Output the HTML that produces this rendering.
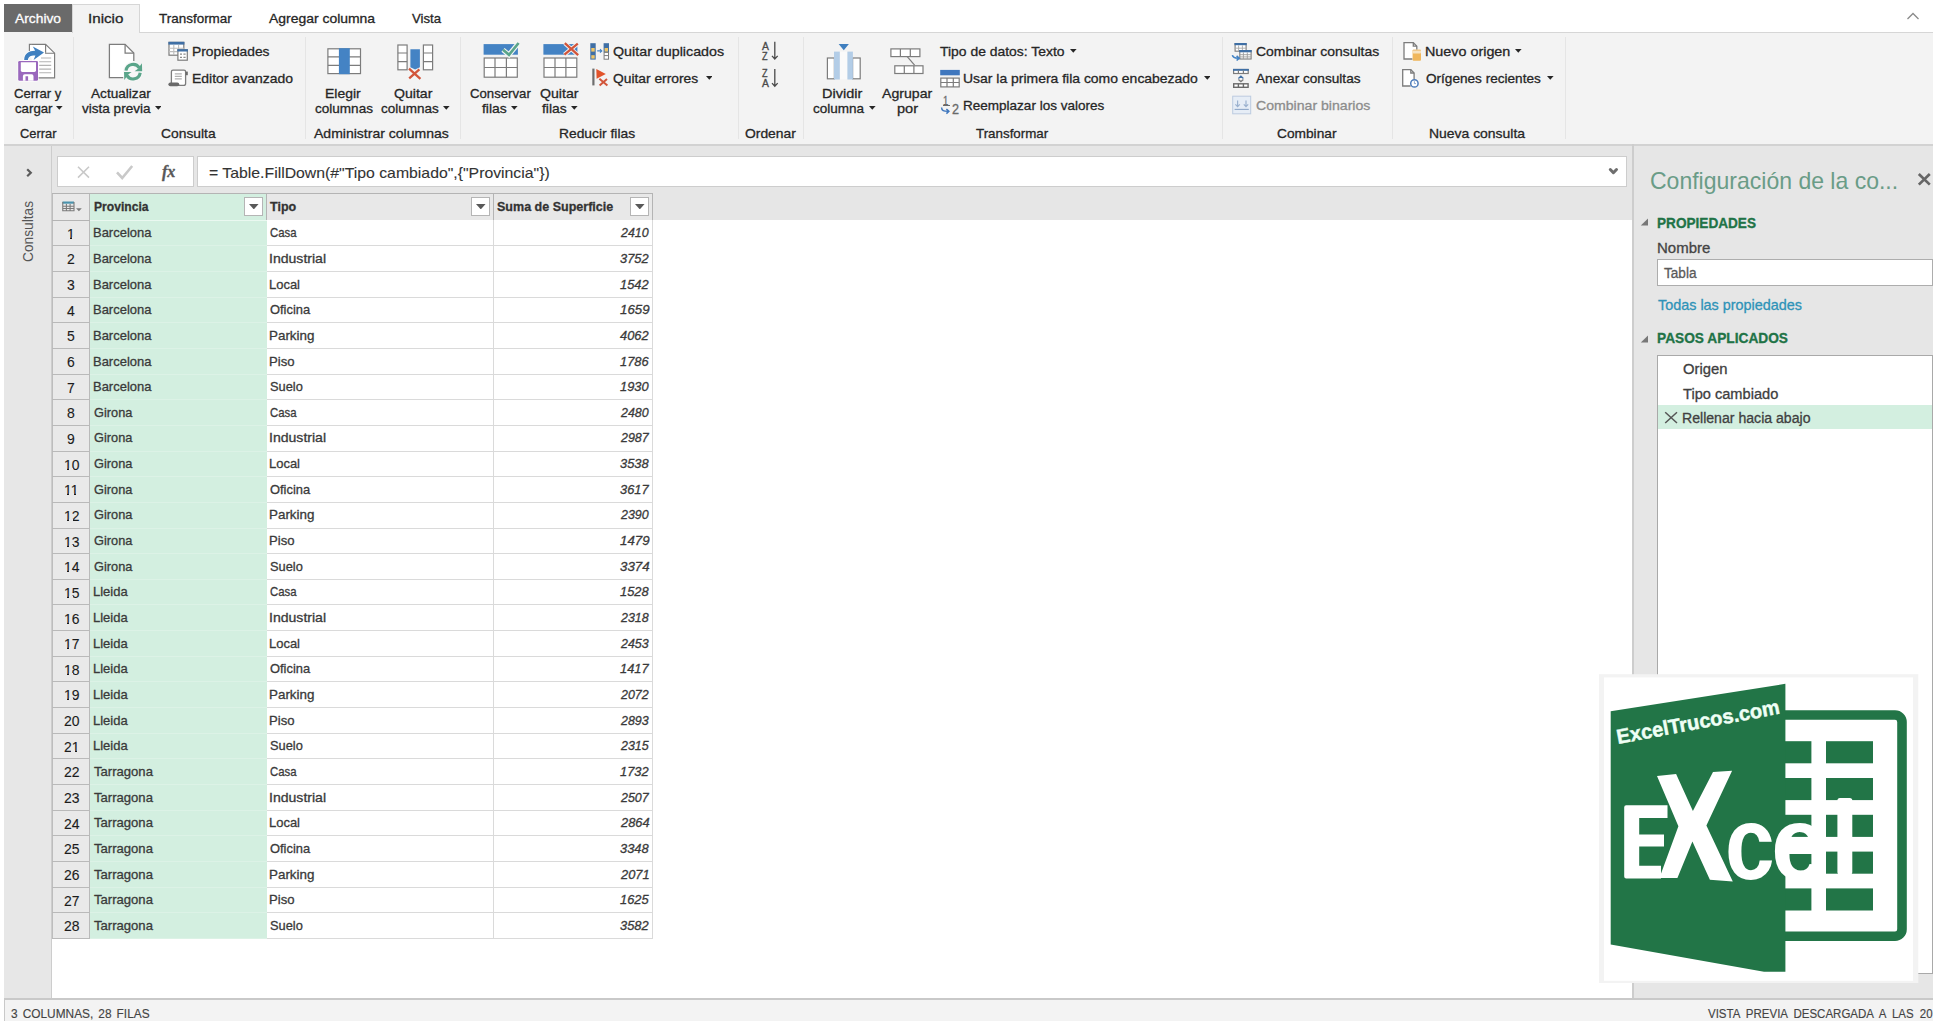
<!DOCTYPE html>
<html><head><meta charset="utf-8"><title>Power Query</title><style>
html,body{margin:0;padding:0;}
body{width:1933px;height:1021px;overflow:hidden;background:#fff;position:relative;font-family:"Liberation Sans", sans-serif;}
#root{position:absolute;left:0;top:0;width:1933px;height:1021px;overflow:hidden;}
#root div,#root svg,#root span.t{position:absolute;}
span.t{white-space:pre;display:block;}
</style></head>
<body><div id="root">
<div style="left:4px;top:32px;width:1929px;height:112px;background:#f3f3f3;"></div>
<div style="left:140px;top:32px;width:1793px;height:1px;background:#d6d6d6;"></div>
<div style="left:4px;top:4px;width:68px;height:28px;background:#6a6a6a;"></div>
<div style="left:72px;top:4px;width:68px;height:29px;background:#f3f3f3;border:1px solid #d6d6d6;box-sizing:border-box;border-bottom:none;"></div>
<div style="left:4px;top:144px;width:1929px;height:854px;background:#e6e6e6;"></div>
<div style="left:4px;top:144px;width:47px;height:854px;background:#e7e7e7;"></div>
<div style="left:51px;top:144px;width:1px;height:854px;background:#cdcdcd;"></div>
<div style="left:4px;top:144px;width:1929px;height:1.6px;background:#d2d2d2;"></div>
<div style="left:52px;top:220px;width:1580px;height:778px;background:#fff;"></div>
<div style="left:1632.2px;top:144px;width:1.8px;height:854px;background:#cdcdcd;"></div>
<div style="left:4px;top:998px;width:1929px;height:23px;background:#f3f3f3;"></div>
<div style="left:4px;top:997.7px;width:1929px;height:2.2px;background:#c9c9c9;"></div>
<div style="left:4px;top:998px;width:1px;height:23px;background:#c9c9c9;"></div>
<span class="t" style="left:15.00px;top:9.00px;line-height:19px;color:#fff;font-size:13.5px;font-weight:400;-webkit-text-stroke:0.3px #fff;transform-origin:0 0;transform:scaleX(1.0223);">Archivo</span>
<span class="t" style="left:87.88px;top:9.00px;line-height:19px;color:#262626;font-size:13.5px;font-weight:400;-webkit-text-stroke:0.3px #262626;transform-origin:0 0;transform:scaleX(1.1231);">Inicio</span>
<span class="t" style="left:158.70px;top:9.00px;line-height:19px;color:#262626;font-size:13.5px;font-weight:400;-webkit-text-stroke:0.3px #262626;transform-origin:0 0;transform:scaleX(0.9971);">Transformar</span>
<span class="t" style="left:269.00px;top:9.00px;line-height:19px;color:#262626;font-size:13.5px;font-weight:400;-webkit-text-stroke:0.3px #262626;transform-origin:0 0;transform:scaleX(1.0320);">Agregar columna</span>
<span class="t" style="left:412.00px;top:9.00px;line-height:19px;color:#262626;font-size:13.5px;font-weight:400;-webkit-text-stroke:0.3px #262626;transform-origin:0 0;transform:scaleX(0.9749);">Vista</span>
<svg style="left:1906px;top:11px" width="14" height="10" viewBox="0 0 14 10"><path d="M1.5 8 L7 2.5 L12.5 8" fill="none" stroke="#8a8a8a" stroke-width="1.3"/></svg>
<div style="left:73.0px;top:37px;width:1px;height:102px;background:#e5e5e5;"></div>
<div style="left:305.0px;top:37px;width:1px;height:102px;background:#e5e5e5;"></div>
<div style="left:460.0px;top:37px;width:1px;height:102px;background:#e5e5e5;"></div>
<div style="left:737.5px;top:37px;width:1px;height:102px;background:#e5e5e5;"></div>
<div style="left:803.0px;top:37px;width:1px;height:102px;background:#e5e5e5;"></div>
<div style="left:1222.0px;top:37px;width:1px;height:102px;background:#e5e5e5;"></div>
<div style="left:1392.0px;top:37px;width:1px;height:102px;background:#e5e5e5;"></div>
<div style="left:1565.0px;top:37px;width:1px;height:102px;background:#e5e5e5;"></div>
<span class="t" style="left:14.00px;top:84.00px;line-height:19px;color:#262626;font-size:13.5px;font-weight:400;-webkit-text-stroke:0.3px #262626;transform-origin:0 0;transform:scaleX(0.9714);">Cerrar y</span>
<span class="t" style="left:14.60px;top:99.00px;line-height:19px;color:#262626;font-size:13.5px;font-weight:400;-webkit-text-stroke:0.3px #262626;transform-origin:0 0;transform:scaleX(0.9801);">cargar</span>
<svg style="left:56.1px;top:106.3px" width="6.6" height="3.8" viewBox="0 0 6.6 3.8"><path d="M0 0H6.6L3.3 3.8Z" fill="#262626"/></svg>
<span class="t" style="left:90.70px;top:84.00px;line-height:19px;color:#262626;font-size:13.5px;font-weight:400;-webkit-text-stroke:0.3px #262626;transform-origin:0 0;transform:scaleX(1.0087);">Actualizar</span>
<span class="t" style="left:82.00px;top:99.00px;line-height:19px;color:#262626;font-size:13.5px;font-weight:400;-webkit-text-stroke:0.3px #262626;transform-origin:0 0;transform:scaleX(1.0033);">vista previa</span>
<svg style="left:154.6px;top:106.3px" width="6.6" height="3.8" viewBox="0 0 6.6 3.8"><path d="M0 0H6.6L3.3 3.8Z" fill="#262626"/></svg>
<span class="t" style="left:191.78px;top:42.00px;line-height:19px;color:#262626;font-size:13.5px;font-weight:400;-webkit-text-stroke:0.3px #262626;transform-origin:0 0;transform:scaleX(1.0219);">Propiedades</span>
<span class="t" style="left:191.77px;top:69.00px;line-height:19px;color:#262626;font-size:13.5px;font-weight:400;-webkit-text-stroke:0.3px #262626;transform-origin:0 0;transform:scaleX(1.0348);">Editor avanzado</span>
<span class="t" style="left:20.20px;top:124.00px;line-height:19px;color:#262626;font-size:13.5px;font-weight:400;-webkit-text-stroke:0.3px #262626;transform-origin:0 0;transform:scaleX(0.9521);">Cerrar</span>
<span class="t" style="left:160.60px;top:124.00px;line-height:19px;color:#262626;font-size:13.5px;font-weight:400;-webkit-text-stroke:0.3px #262626;transform-origin:0 0;transform:scaleX(1.0247);">Consulta</span>
<span class="t" style="left:325.47px;top:84.00px;line-height:19px;color:#262626;font-size:13.5px;font-weight:400;-webkit-text-stroke:0.3px #262626;transform-origin:0 0;transform:scaleX(1.0318);">Elegir</span>
<span class="t" style="left:314.60px;top:99.00px;line-height:19px;color:#262626;font-size:13.5px;font-weight:400;-webkit-text-stroke:0.3px #262626;transform-origin:0 0;transform:scaleX(1.0030);">columnas</span>
<span class="t" style="left:394.40px;top:84.00px;line-height:19px;color:#262626;font-size:13.5px;font-weight:400;-webkit-text-stroke:0.3px #262626;transform-origin:0 0;transform:scaleX(1.0438);">Quitar</span>
<span class="t" style="left:380.80px;top:99.00px;line-height:19px;color:#262626;font-size:13.5px;font-weight:400;-webkit-text-stroke:0.3px #262626;transform-origin:0 0;transform:scaleX(0.9978);">columnas</span>
<svg style="left:443.0px;top:106.3px" width="6.6" height="3.8" viewBox="0 0 6.6 3.8"><path d="M0 0H6.6L3.3 3.8Z" fill="#262626"/></svg>
<span class="t" style="left:314.00px;top:124.00px;line-height:19px;color:#262626;font-size:13.5px;font-weight:400;-webkit-text-stroke:0.3px #262626;transform-origin:0 0;transform:scaleX(1.0381);">Administrar columnas</span>
<span class="t" style="left:469.70px;top:84.00px;line-height:19px;color:#262626;font-size:13.5px;font-weight:400;-webkit-text-stroke:0.3px #262626;transform-origin:0 0;transform:scaleX(0.9765);">Conservar</span>
<span class="t" style="left:482.00px;top:99.00px;line-height:19px;color:#262626;font-size:13.5px;font-weight:400;-webkit-text-stroke:0.3px #262626;transform-origin:0 0;transform:scaleX(1.0306);">filas</span>
<svg style="left:511.4px;top:106.3px" width="6.6" height="3.8" viewBox="0 0 6.6 3.8"><path d="M0 0H6.6L3.3 3.8Z" fill="#262626"/></svg>
<span class="t" style="left:540.00px;top:84.00px;line-height:19px;color:#262626;font-size:13.5px;font-weight:400;-webkit-text-stroke:0.3px #262626;transform-origin:0 0;transform:scaleX(1.0465);">Quitar</span>
<span class="t" style="left:542.00px;top:99.00px;line-height:19px;color:#262626;font-size:13.5px;font-weight:400;-webkit-text-stroke:0.3px #262626;transform-origin:0 0;transform:scaleX(1.0265);">filas</span>
<svg style="left:571.3px;top:106.3px" width="6.6" height="3.8" viewBox="0 0 6.6 3.8"><path d="M0 0H6.6L3.3 3.8Z" fill="#262626"/></svg>
<span class="t" style="left:613.30px;top:42.00px;line-height:19px;color:#262626;font-size:13.5px;font-weight:400;-webkit-text-stroke:0.3px #262626;transform-origin:0 0;transform:scaleX(1.0578);">Quitar duplicados</span>
<span class="t" style="left:613.30px;top:69.00px;line-height:19px;color:#262626;font-size:13.5px;font-weight:400;-webkit-text-stroke:0.3px #262626;transform-origin:0 0;transform:scaleX(1.0225);">Quitar errores</span>
<svg style="left:705.7px;top:75.9px" width="6.6" height="3.8" viewBox="0 0 6.6 3.8"><path d="M0 0H6.6L3.3 3.8Z" fill="#262626"/></svg>
<span class="t" style="left:558.98px;top:124.00px;line-height:19px;color:#262626;font-size:13.5px;font-weight:400;-webkit-text-stroke:0.3px #262626;transform-origin:0 0;transform:scaleX(1.0241);">Reducir filas</span>
<span class="t" style="left:744.60px;top:124.00px;line-height:19px;color:#262626;font-size:13.5px;font-weight:400;-webkit-text-stroke:0.3px #262626;transform-origin:0 0;transform:scaleX(1.0274);">Ordenar</span>
<span class="t" style="left:822.12px;top:84.00px;line-height:19px;color:#262626;font-size:13.5px;font-weight:400;-webkit-text-stroke:0.3px #262626;transform-origin:0 0;transform:scaleX(1.0755);">Dividir</span>
<span class="t" style="left:813.00px;top:99.00px;line-height:19px;color:#262626;font-size:13.5px;font-weight:400;-webkit-text-stroke:0.3px #262626;transform-origin:0 0;transform:scaleX(1.0016);">columna</span>
<svg style="left:869.1px;top:106.3px" width="6.6" height="3.8" viewBox="0 0 6.6 3.8"><path d="M0 0H6.6L3.3 3.8Z" fill="#262626"/></svg>
<span class="t" style="left:882.00px;top:84.00px;line-height:19px;color:#262626;font-size:13.5px;font-weight:400;-webkit-text-stroke:0.3px #262626;transform-origin:0 0;transform:scaleX(1.0447);">Agrupar</span>
<span class="t" style="left:897.00px;top:99.00px;line-height:19px;color:#262626;font-size:13.5px;font-weight:400;-webkit-text-stroke:0.3px #262626;transform-origin:0 0;transform:scaleX(1.0791);">por</span>
<span class="t" style="left:940.20px;top:42.00px;line-height:19px;color:#262626;font-size:13.5px;font-weight:400;-webkit-text-stroke:0.3px #262626;transform-origin:0 0;transform:scaleX(1.0302);">Tipo de datos: Texto</span>
<svg style="left:1070px;top:48.9px" width="6.6" height="3.8" viewBox="0 0 6.6 3.8"><path d="M0 0H6.6L3.3 3.8Z" fill="#262626"/></svg>
<span class="t" style="left:962.77px;top:69.00px;line-height:19px;color:#262626;font-size:13.5px;font-weight:400;-webkit-text-stroke:0.3px #262626;transform-origin:0 0;transform:scaleX(1.0330);">Usar la primera fila como encabezado</span>
<svg style="left:1203.6px;top:75.9px" width="6.6" height="3.8" viewBox="0 0 6.6 3.8"><path d="M0 0H6.6L3.3 3.8Z" fill="#262626"/></svg>
<span class="t" style="left:962.80px;top:96.00px;line-height:19px;color:#262626;font-size:13.5px;font-weight:400;-webkit-text-stroke:0.3px #262626;transform-origin:0 0;transform:scaleX(1.0014);">Reemplazar los valores</span>
<span class="t" style="left:976.00px;top:124.00px;line-height:19px;color:#262626;font-size:13.5px;font-weight:400;-webkit-text-stroke:0.3px #262626;transform-origin:0 0;transform:scaleX(0.9889);">Transformar</span>
<span class="t" style="left:1255.60px;top:42.00px;line-height:19px;color:#262626;font-size:13.5px;font-weight:400;-webkit-text-stroke:0.3px #262626;transform-origin:0 0;transform:scaleX(1.0322);">Combinar consultas</span>
<span class="t" style="left:1255.60px;top:69.00px;line-height:19px;color:#262626;font-size:13.5px;font-weight:400;-webkit-text-stroke:0.3px #262626;transform-origin:0 0;transform:scaleX(1.0096);">Anexar consultas</span>
<span class="t" style="left:1255.60px;top:96.00px;line-height:19px;color:#8c8c8c;font-size:13.5px;font-weight:400;-webkit-text-stroke:0.3px #8c8c8c;transform-origin:0 0;transform:scaleX(1.0437);">Combinar binarios</span>
<span class="t" style="left:1276.80px;top:124.00px;line-height:19px;color:#262626;font-size:13.5px;font-weight:400;-webkit-text-stroke:0.3px #262626;transform-origin:0 0;transform:scaleX(1.0165);">Combinar</span>
<span class="t" style="left:1425.04px;top:42.00px;line-height:19px;color:#262626;font-size:13.5px;font-weight:400;-webkit-text-stroke:0.3px #262626;transform-origin:0 0;transform:scaleX(1.0623);">Nuevo origen</span>
<svg style="left:1515.3px;top:48.9px" width="6.6" height="3.8" viewBox="0 0 6.6 3.8"><path d="M0 0H6.6L3.3 3.8Z" fill="#262626"/></svg>
<span class="t" style="left:1426.20px;top:69.00px;line-height:19px;color:#262626;font-size:13.5px;font-weight:400;-webkit-text-stroke:0.3px #262626;transform-origin:0 0;transform:scaleX(1.0061);">Orígenes recientes</span>
<svg style="left:1547px;top:75.9px" width="6.6" height="3.8" viewBox="0 0 6.6 3.8"><path d="M0 0H6.6L3.3 3.8Z" fill="#262626"/></svg>
<span class="t" style="left:1428.97px;top:124.00px;line-height:19px;color:#262626;font-size:13.5px;font-weight:400;-webkit-text-stroke:0.3px #262626;transform-origin:0 0;transform:scaleX(1.0319);">Nueva consulta</span>
<svg style="left:14px;top:40px" width="46" height="44" viewBox="14 40 46 44"><path d="M29.4 51V44.4H45.6L54.6 53.2V77.9H37" fill="#fff" stroke="#7c7c7c" stroke-width="1.15"/><path d="M45.6 44.4V53.2H54.6" fill="none" stroke="#7c7c7c" stroke-width="1.15"/><path d="M41 58H51.2M39.2 61.7H51.2M39.2 65.4H51.2M39.2 69.1H51.2M39.2 72.8H51.2" stroke="#b4b4b4" stroke-width="1.1"/><path d="M24.2 60 C24.2 53.2 29.5 50.6 35.2 50.8 L32.8 46.6 L44 52.6 L33.6 59.9 L35.4 55.4 C31 55.2 28.2 56.6 27.9 60 Z" fill="#3f80c0" stroke="#fff" stroke-width="1.6" paint-order="stroke"/><rect x="18.2" y="61" width="19.8" height="19.8" rx="1.3" fill="#9a68bd" stroke="#fff" stroke-width="1.2" paint-order="stroke"/><path d="M20.8 62.2H36V70.3Q36 71.9 34.4 71.9H22.4Q20.8 71.9 20.8 70.3Z" fill="#fff"/><path d="M22.9 80.8V76.2Q22.9 74.3 24.8 74.3H31.6Q33.5 74.3 33.5 76.2V80.8H28.1V76.2H25.5V80.8Z" fill="#fff"/></svg>
<svg style="left:104px;top:40px" width="42" height="44" viewBox="104 40 42 44"><path d="M123.2 77.5H109.4V44.4H125.1L133.8 53V61" fill="#fff" stroke="#7c7c7c" stroke-width="1.25"/><path d="M125.1 44.4V53H133.8" fill="none" stroke="#7c7c7c" stroke-width="1.25"/><circle cx="133.1" cy="71.6" r="10" fill="#f7f7f7"/><path d="M126 70.6 A7.2 7.2 0 0 1 139.3 67.9" fill="none" stroke="#5aa58a" stroke-width="3.1"/><path d="M141.9 63.2L142.2 71.2H134.6L138 68.8Z" fill="#5aa58a"/><path d="M140.2 72.7 A7.2 7.2 0 0 1 126.9 75.4" fill="none" stroke="#5aa58a" stroke-width="3.1"/><path d="M124.3 80L124 72.1H131.6L128.2 74.4Z" fill="#5aa58a"/></svg>
<svg style="left:166px;top:40px" width="24" height="23" viewBox="166 40 24 23"><rect x="169" y="42.4" width="14.8" height="12.8" fill="#fff" stroke="#7c7c7c" stroke-width="1.2"/><rect x="168.4" y="41.8" width="16" height="2.8" fill="#3f6fa5"/><path d="M173.8 45V55M178.6 45V50M169 48.3H184M169 51.6H177" stroke="#bdbdbd" stroke-width="1.1" fill="none"/><rect x="177.9" y="49.8" width="9.4" height="10.4" fill="#fff" stroke="#7c7c7c" stroke-width="1.2"/><rect x="177.3" y="49.2" width="10.6" height="2.3" fill="#3f6fa5"/><path d="M180 54.2H182M183.4 54.2H185.6M180 57.3H182M183.4 57.3H185.6" stroke="#8a8a8a" stroke-width="1.2"/></svg>
<svg style="left:166px;top:68px" width="24" height="20" viewBox="166 68 24 20"><path d="M171.4 83V71.8Q171.4 70.2 173 70.2H184Q185.6 70.2 185.6 71.8V83.4Q185.6 85.4 183.6 85.4H178" fill="#fff" stroke="#7c7c7c" stroke-width="1.3"/><path d="M185.6 71.6H187.8V75.2H185.6Z" fill="#6a6a6a"/><path d="M174.8 73.9H181.8M174.8 76.4H181.8M174.8 78.9H181.8" stroke="#b0b0b0" stroke-width="1.1"/><rect x="168.4" y="82.4" width="10.8" height="3.8" rx="1.9" fill="#6a6a6a"/></svg>
<svg style="left:325px;top:46px" width="39" height="30" viewBox="325 46 39 30"><rect x="327.9" y="48.8" width="32.6" height="24.8" fill="#fff" stroke="#7c7c7c" stroke-width="1.2"/><path d="M327.9 56.8H360.5M327.9 65.4H360.5" stroke="#7c7c7c" stroke-width="1.2"/><rect x="338.9" y="48.2" width="10.9" height="26" fill="#4483c4"/></svg>
<svg style="left:395px;top:42px" width="41" height="40" viewBox="395 42 41 40"><rect x="397.9" y="45" width="9.2" height="24.8" fill="#fff" stroke="#7c7c7c" stroke-width="1.2"/><path d="M397.9 53H407.1M397.9 61.6H407.1" stroke="#7c7c7c" stroke-width="1.2"/><rect x="423.4" y="45" width="9.2" height="24.8" fill="#fff" stroke="#7c7c7c" stroke-width="1.2"/><path d="M423.4 53H432.6M423.4 61.6H432.6" stroke="#7c7c7c" stroke-width="1.2"/><path d="M410.4 49.2H419.9V67.2L415.1 69.4L410.4 67.2Z" fill="#4483c4"/><path d="M409 68.6L420.4 78.8M419.4 69.4L409.2 78.4" stroke="#d2553a" stroke-width="2.3" fill="none"/></svg>
<svg style="left:481px;top:40px" width="41" height="40" viewBox="481 40 41 40"><rect x="483.6" y="44.1" width="34.3" height="10.6" fill="#4483c4"/><rect x="484.2" y="58" width="33.1" height="19.2" fill="#fff" stroke="#7c7c7c" stroke-width="1.2"/><path d="M495 58V77.2M506.4 58V77.2M484.2 67.5H517.3" stroke="#7c7c7c" stroke-width="1.2"/><path d="M503 49.8L509 54.8L518.6 43" fill="none" stroke="#f3f6f5" stroke-width="5"/><path d="M503 49.8L509 54.8L518.6 43" fill="none" stroke="#5aa58a" stroke-width="2.7"/></svg>
<svg style="left:541px;top:40px" width="41" height="40" viewBox="541 40 41 40"><rect x="543.4" y="44.1" width="34" height="10.6" fill="#4483c4"/><rect x="544" y="58" width="32.8" height="19.2" fill="#fff" stroke="#7c7c7c" stroke-width="1.2"/><path d="M555 58V77.2M565.9 58V77.2M544 67.5H576.8" stroke="#7c7c7c" stroke-width="1.2"/><path d="M564.8 43.2L578.2 55.2M577.8 43.6L564.4 54.6" stroke="#f3f3f3" stroke-width="4.2" fill="none"/><path d="M564.8 43.2L578.2 55.2M577.8 43.6L564.4 54.6" stroke="#d2553a" stroke-width="2.3" fill="none"/></svg>
<svg style="left:588px;top:41px" width="24" height="21" viewBox="588 41 24 21"><rect x="590.3" y="43.2" width="5.4" height="16.4" fill="#3f6fa5"/><rect x="591.3" y="48" width="3.4" height="3.6" fill="#f0c566"/><rect x="591.3" y="55.2" width="3.4" height="3.4" fill="#f0c566"/><path d="M597.2 50.9H601.6M600 49.2L601.8 50.9L600 52.6" stroke="#4483c4" stroke-width="1.1" fill="none"/><rect x="603.6" y="43.2" width="5.4" height="9" fill="#3f6fa5"/><rect x="604.6" y="48" width="3.4" height="3.6" fill="#f0c566"/><rect x="604.1" y="52.4" width="4.4" height="6.8" fill="#fff" stroke="#7c7c7c" stroke-width="1"/><path d="M604.1 55.6H608.5" stroke="#7c7c7c" stroke-width="1"/></svg>
<svg style="left:590px;top:67px" width="20" height="21" viewBox="590 67 20 21"><rect x="592.3" y="68.6" width="2.2" height="16.8" fill="#6e6e6e"/><path d="M596.3 69L605.8 74L596.6 78.8Z" fill="#e2532b"/><path d="M599.4 78.8L607.4 85.6M607 79L599.6 85.4" stroke="#d2553a" stroke-width="2" fill="none"/></svg>
<svg style="left:760px;top:40px" width="20" height="22" viewBox="760 40 20 22"><path d="M774.8 41.8V59M772 55.9L774.8 59L777.7 55.9" fill="none" stroke="#4a4a4a" stroke-width="1.3"/></svg>
<span class="t" style="left:761.80px;top:38.00px;line-height:16px;color:#4a4a4a;font-size:11.2px;font-weight:400;-webkit-text-stroke:0.35px #4a4a4a;transform-origin:0 0;transform:scaleX(0.9250);">A</span>
<span class="t" style="left:762.20px;top:48.00px;line-height:16px;color:#4a4a4a;font-size:11.2px;font-weight:400;-webkit-text-stroke:0.35px #4a4a4a;transform-origin:0 0;transform:scaleX(0.8143);">Z</span>
<svg style="left:760px;top:67px" width="20" height="22" viewBox="760 67 20 22"><path d="M774.8 69V86.2M772 83.1L774.8 86.2L777.7 83.1" fill="none" stroke="#4a4a4a" stroke-width="1.3"/></svg>
<span class="t" style="left:762.20px;top:65.00px;line-height:16px;color:#4a4a4a;font-size:11.2px;font-weight:400;-webkit-text-stroke:0.35px #4a4a4a;transform-origin:0 0;transform:scaleX(0.8143);">Z</span>
<span class="t" style="left:761.80px;top:75.00px;line-height:16px;color:#4a4a4a;font-size:11.2px;font-weight:400;-webkit-text-stroke:0.35px #4a4a4a;transform-origin:0 0;transform:scaleX(0.9250);">A</span>
<svg style="left:824px;top:42px" width="40" height="40" viewBox="824 42 40 40"><path d="M838.7 44.1H848.9L843.8 50.2Z" fill="#3f7fbf"/><rect x="839.8" y="51.6" width="7.6" height="27.8" fill="#fafafa"/><rect x="827.4" y="58" width="7" height="20.8" fill="#fff" stroke="#7c7c7c" stroke-width="1.2"/><rect x="852.6" y="58" width="7.6" height="20.8" fill="#fff" stroke="#7c7c7c" stroke-width="1.2"/><rect x="834" y="51.6" width="5.8" height="27.9" fill="#b3cde7"/><rect x="847.4" y="51.6" width="5.5" height="27.9" fill="#b3cde7"/></svg>
<svg style="left:888px;top:46px" width="38" height="30" viewBox="888 46 38 30"><path d="M907.2 56.6L914.6 65.2" stroke="#7c7c7c" stroke-width="1.2"/><rect x="890.9" y="48.9" width="29" height="7.7" fill="#fff" stroke="#7c7c7c" stroke-width="1.2"/><path d="M900.4 48.9V56.6M910.3 48.9V56.6" stroke="#7c7c7c" stroke-width="1.2"/><rect x="894.8" y="65.8" width="28.2" height="7.7" fill="#fff" stroke="#7c7c7c" stroke-width="1.2"/><path d="M904.3 65.8V73.5M913.9 65.8V73.5" stroke="#7c7c7c" stroke-width="1.2"/></svg>
<svg style="left:938px;top:68px" width="24" height="21" viewBox="938 68 24 21"><rect x="940.2" y="69.9" width="19.6" height="5.4" fill="#3f77be"/><rect x="940.8" y="78.1" width="18.4" height="8.8" fill="#fff" stroke="#7c7c7c" stroke-width="1.2"/><path d="M947 78.1V86.9M953.3 78.1V86.9M940.8 82.5H959.2" stroke="#7c7c7c" stroke-width="1.2"/></svg>
<span class="t" style="left:943.30px;top:92.00px;line-height:18px;color:#6a6a6a;font-size:12.5px;font-weight:400;-webkit-text-stroke:0.3px #6a6a6a;transform-origin:0 0;transform:scaleX(0.7571);">1</span>
<div style="left:942.6px;top:105.2px;width:7px;height:1px;background:#6a6a6a;"></div>
<span class="t" style="left:951.60px;top:99.00px;line-height:20px;color:#6a6a6a;font-size:14.5px;font-weight:400;-webkit-text-stroke:0.3px #6a6a6a;transform-origin:0 0;transform:scaleX(0.8750);">2</span>
<svg style="left:940px;top:106px" width="12" height="9" viewBox="940 106 12 9"><path d="M941.6 107.6C941.6 110.6 943.6 111.4 948.4 111.3M946.4 109L948.9 111.3L946.4 113.6" fill="none" stroke="#3f77be" stroke-width="1.5"/></svg>
<svg style="left:1230px;top:41px" width="24" height="22" viewBox="1230 41 24 22"><rect x="1235.1" y="43.6" width="11" height="7.6" fill="#fff" stroke="#7c7c7c" stroke-width="1.1"/><rect x="1234.5" y="43" width="12.2" height="2.2" fill="#3f6fa5"/><path d="M1238.6 45.4V51M1242.4 45.4V51M1235 48.2H1246" stroke="#a9a9a9" stroke-width="0.9"/><rect x="1239.8" y="50.6" width="11.3" height="8.4" fill="#fff" stroke="#7c7c7c" stroke-width="1.1"/><rect x="1239.2" y="50" width="12.5" height="2.3" fill="#3f6fa5"/><path d="M1243.4 52.4V59M1247.3 52.4V59M1240 54.7H1251M1240 56.9H1251" stroke="#9c9c9c" stroke-width="0.9"/><path d="M1232.4 55.2C1232.8 57.6 1234.6 58.3 1238.6 58.2M1236.6 55.9L1239.2 58.2L1236.6 60.5" fill="none" stroke="#4483c4" stroke-width="1.6"/></svg>
<svg style="left:1231px;top:67px" width="20" height="22" viewBox="1231 67 20 22"><rect x="1233.6" y="69.5" width="14.6" height="4" fill="#fff" stroke="#7c7c7c" stroke-width="1.2"/><rect x="1233" y="68.9" width="15.8" height="1.9" fill="#3f6fa5"/><path d="M1238.4 70.6V73.5M1243.4 70.6V73.5" stroke="#7c7c7c" stroke-width="1.2"/><path d="M1238.4 78.4L1240.9 76.2L1243.4 78.4" fill="none" stroke="#3f6fa5" stroke-width="1.3"/><path d="M1238.4 79.4L1240.9 81.6L1243.4 79.4" fill="none" stroke="#7c7c7c" stroke-width="1.3"/><rect x="1233.7" y="83.8" width="14.4" height="3.5" fill="#fff" stroke="#6a6a6a" stroke-width="1.4"/><path d="M1238.4 83.8V87.3M1243.4 83.8V87.3" stroke="#6a6a6a" stroke-width="1.4"/></svg>
<svg style="left:1230px;top:94px" width="24" height="22" viewBox="1230 94 24 22"><rect x="1232.7" y="96.2" width="18" height="17.6" fill="#e6edf6" stroke="#bccbe0" stroke-width="1"/><path d="M1237.6 100.4V106.6M1235.4 104.4L1237.6 106.7L1239.8 104.4M1246 100.4V106.6M1243.8 104.4L1246 106.7L1248.2 104.4" fill="none" stroke="#9cb2cf" stroke-width="1.2"/><path d="M1234.6 109.4H1248.8" stroke="#8ea7c8" stroke-width="1.1"/></svg>
<svg style="left:1400px;top:40px" width="24" height="23" viewBox="1400 40 24 23"><path d="M1412.4 59H1404V42.6H1413.3L1416.8 46.2V50" fill="#fff" stroke="#7c7c7c" stroke-width="1.3"/><path d="M1413.3 42.6V46.2H1416.8" fill="none" stroke="#7c7c7c" stroke-width="1.3"/><rect x="1412.6" y="49.7" width="8.4" height="11" rx="1" fill="#f0b75c"/><rect x="1412.6" y="49.7" width="8.4" height="3.8" rx="1" fill="#f6e3c2"/><rect x="1412.6" y="49.7" width="8.4" height="1.2" rx="0.6" fill="#efc98e"/></svg>
<svg style="left:1400px;top:67px" width="22" height="23" viewBox="1400 67 22 23"><path d="M1410.6 86H1402.7V69.6H1410.8L1414.1 73V79.4" fill="#fff" stroke="#7c7c7c" stroke-width="1.3"/><path d="M1410.8 69.6V73H1414.1" fill="none" stroke="#7c7c7c" stroke-width="1.3"/><circle cx="1414.4" cy="83.4" r="3.7" fill="#fff" stroke="#4d7cba" stroke-width="1.5"/><path d="M1414.4 81.2V83.6H1416" fill="none" stroke="#7a9ccc" stroke-width="0.9"/></svg>
<svg style="left:25px;top:167px" width="9" height="12" viewBox="0 0 9 12"><path d="M2.2 2.2 L5.8 5.7 L2.2 9.2" fill="none" stroke="#5c5c5c" stroke-width="2.2"/></svg>
<span class="t" style="left:20px;top:262px;font-size:14px;color:#555;line-height:16px;transform-origin:0 0;transform:rotate(-90deg) scaleX(0.98);">Consultas</span>
<div style="left:57.3px;top:156.4px;width:136.6px;height:31px;background:#fff;border:1.4px solid #cdcdcd;box-sizing:border-box;"></div>
<div style="left:197px;top:156.4px;width:1430px;height:31px;background:#fff;border:1.4px solid #cdcdcd;box-sizing:border-box;"></div>
<svg style="left:76px;top:165px" width="15" height="15" viewBox="0 0 15 15"><path d="M2 1.8 L13 12.6 M13 1.8 L2 12.6" stroke="#c9c9c9" stroke-width="1.6" fill="none"/></svg>
<svg style="left:115px;top:164px" width="20" height="17" viewBox="0 0 20 17"><path d="M2 8.4 L7.2 14 L17.2 2" stroke="#c9c9c9" stroke-width="2.6" fill="none"/></svg>
<span class="t" style="left:162.00px;top:161.00px;line-height:21px;color:#585858;font-size:16px;font-weight:700;font-style:italic;font-family:'Liberation Serif', serif;-webkit-text-stroke:0.3px #585858;transform-origin:0 0;transform:scaleX(1.0054);">fx</span>
<span class="t" style="left:208.50px;top:163.00px;line-height:20px;color:#333;font-size:14.5px;font-weight:400;-webkit-text-stroke:0.1px #333;transform-origin:0 0;transform:scaleX(1.0894);">= Table.FillDown(#&quot;Tipo cambiado&quot;,{&quot;Provincia&quot;})</span>
<svg style="left:1606px;top:165px" width="16" height="12" viewBox="0 0 16 12"><path d="M4.3 4.5 L7.4 7.7 L10.5 4.5" fill="none" stroke="#6e6e6e" stroke-width="3" stroke-linecap="round" stroke-linejoin="round"/></svg>
<div style="left:52px;top:193.5px;width:37.5px;height:744.8999999999999px;background:#e9e9e9;"></div>
<div style="left:89.5px;top:193.5px;width:177.0px;height:744.8999999999999px;background:#d3efe0;"></div>
<div style="left:266.5px;top:193.5px;width:386.0px;height:26.69999999999999px;background:#e8e8e8;"></div>
<div style="left:52px;top:193.0px;width:601.0px;height:1px;background:#b4b4b4;"></div>
<div style="left:51.5px;top:193.5px;width:1px;height:744.8999999999999px;background:#bdbdbd;"></div>
<div style="left:88.5px;top:193.5px;width:1px;height:745.3999999999999px;background:#b9b9b9;"></div>
<div style="left:266.0px;top:193.5px;width:1.2px;height:26.69999999999999px;background:#b4b4b4;"></div>
<div style="left:493.0px;top:193.5px;width:1.2px;height:26.69999999999999px;background:#b4b4b4;"></div>
<div style="left:652.0px;top:193.5px;width:1.2px;height:26.69999999999999px;background:#b4b4b4;"></div>
<div style="left:52px;top:219.7px;width:37.5px;height:1px;background:#b4b4b4;"></div>
<div style="left:89.5px;top:219.89999999999998px;width:177.0px;height:1px;background:#eaf8f0;"></div>
<div style="left:493.0px;top:220.2px;width:1px;height:718.1999999999998px;background:#dadada;"></div>
<div style="left:652.0px;top:220.2px;width:1px;height:718.1999999999998px;background:#dadada;"></div>
<div style="left:52px;top:245.35px;width:37.5px;height:1px;background:#b9b9b9;"></div>
<div style="left:89.5px;top:245.35px;width:177.0px;height:1px;background:#dcf2e6;"></div>
<div style="left:266.5px;top:245.35px;width:386.0px;height:1px;background:#dadada;"></div>
<div style="left:52px;top:271.0px;width:37.5px;height:1px;background:#b9b9b9;"></div>
<div style="left:89.5px;top:271.0px;width:177.0px;height:1px;background:#dcf2e6;"></div>
<div style="left:266.5px;top:271.0px;width:386.0px;height:1px;background:#dadada;"></div>
<div style="left:52px;top:296.65px;width:37.5px;height:1px;background:#b9b9b9;"></div>
<div style="left:89.5px;top:296.65px;width:177.0px;height:1px;background:#dcf2e6;"></div>
<div style="left:266.5px;top:296.65px;width:386.0px;height:1px;background:#dadada;"></div>
<div style="left:52px;top:322.3px;width:37.5px;height:1px;background:#b9b9b9;"></div>
<div style="left:89.5px;top:322.3px;width:177.0px;height:1px;background:#dcf2e6;"></div>
<div style="left:266.5px;top:322.3px;width:386.0px;height:1px;background:#dadada;"></div>
<div style="left:52px;top:347.95px;width:37.5px;height:1px;background:#b9b9b9;"></div>
<div style="left:89.5px;top:347.95px;width:177.0px;height:1px;background:#dcf2e6;"></div>
<div style="left:266.5px;top:347.95px;width:386.0px;height:1px;background:#dadada;"></div>
<div style="left:52px;top:373.6px;width:37.5px;height:1px;background:#b9b9b9;"></div>
<div style="left:89.5px;top:373.6px;width:177.0px;height:1px;background:#dcf2e6;"></div>
<div style="left:266.5px;top:373.6px;width:386.0px;height:1px;background:#dadada;"></div>
<div style="left:52px;top:399.25px;width:37.5px;height:1px;background:#b9b9b9;"></div>
<div style="left:89.5px;top:399.25px;width:177.0px;height:1px;background:#dcf2e6;"></div>
<div style="left:266.5px;top:399.25px;width:386.0px;height:1px;background:#dadada;"></div>
<div style="left:52px;top:424.9px;width:37.5px;height:1px;background:#b9b9b9;"></div>
<div style="left:89.5px;top:424.9px;width:177.0px;height:1px;background:#dcf2e6;"></div>
<div style="left:266.5px;top:424.9px;width:386.0px;height:1px;background:#dadada;"></div>
<div style="left:52px;top:450.55px;width:37.5px;height:1px;background:#b9b9b9;"></div>
<div style="left:89.5px;top:450.55px;width:177.0px;height:1px;background:#dcf2e6;"></div>
<div style="left:266.5px;top:450.55px;width:386.0px;height:1px;background:#dadada;"></div>
<div style="left:52px;top:476.2px;width:37.5px;height:1px;background:#b9b9b9;"></div>
<div style="left:89.5px;top:476.2px;width:177.0px;height:1px;background:#dcf2e6;"></div>
<div style="left:266.5px;top:476.2px;width:386.0px;height:1px;background:#dadada;"></div>
<div style="left:52px;top:501.85px;width:37.5px;height:1px;background:#b9b9b9;"></div>
<div style="left:89.5px;top:501.85px;width:177.0px;height:1px;background:#dcf2e6;"></div>
<div style="left:266.5px;top:501.85px;width:386.0px;height:1px;background:#dadada;"></div>
<div style="left:52px;top:527.5px;width:37.5px;height:1px;background:#b9b9b9;"></div>
<div style="left:89.5px;top:527.5px;width:177.0px;height:1px;background:#dcf2e6;"></div>
<div style="left:266.5px;top:527.5px;width:386.0px;height:1px;background:#dadada;"></div>
<div style="left:52px;top:553.15px;width:37.5px;height:1px;background:#b9b9b9;"></div>
<div style="left:89.5px;top:553.15px;width:177.0px;height:1px;background:#dcf2e6;"></div>
<div style="left:266.5px;top:553.15px;width:386.0px;height:1px;background:#dadada;"></div>
<div style="left:52px;top:578.8px;width:37.5px;height:1px;background:#b9b9b9;"></div>
<div style="left:89.5px;top:578.8px;width:177.0px;height:1px;background:#dcf2e6;"></div>
<div style="left:266.5px;top:578.8px;width:386.0px;height:1px;background:#dadada;"></div>
<div style="left:52px;top:604.45px;width:37.5px;height:1px;background:#b9b9b9;"></div>
<div style="left:89.5px;top:604.45px;width:177.0px;height:1px;background:#dcf2e6;"></div>
<div style="left:266.5px;top:604.45px;width:386.0px;height:1px;background:#dadada;"></div>
<div style="left:52px;top:630.1px;width:37.5px;height:1px;background:#b9b9b9;"></div>
<div style="left:89.5px;top:630.1px;width:177.0px;height:1px;background:#dcf2e6;"></div>
<div style="left:266.5px;top:630.1px;width:386.0px;height:1px;background:#dadada;"></div>
<div style="left:52px;top:655.75px;width:37.5px;height:1px;background:#b9b9b9;"></div>
<div style="left:89.5px;top:655.75px;width:177.0px;height:1px;background:#dcf2e6;"></div>
<div style="left:266.5px;top:655.75px;width:386.0px;height:1px;background:#dadada;"></div>
<div style="left:52px;top:681.4px;width:37.5px;height:1px;background:#b9b9b9;"></div>
<div style="left:89.5px;top:681.4px;width:177.0px;height:1px;background:#dcf2e6;"></div>
<div style="left:266.5px;top:681.4px;width:386.0px;height:1px;background:#dadada;"></div>
<div style="left:52px;top:707.05px;width:37.5px;height:1px;background:#b9b9b9;"></div>
<div style="left:89.5px;top:707.05px;width:177.0px;height:1px;background:#dcf2e6;"></div>
<div style="left:266.5px;top:707.05px;width:386.0px;height:1px;background:#dadada;"></div>
<div style="left:52px;top:732.7px;width:37.5px;height:1px;background:#b9b9b9;"></div>
<div style="left:89.5px;top:732.7px;width:177.0px;height:1px;background:#dcf2e6;"></div>
<div style="left:266.5px;top:732.7px;width:386.0px;height:1px;background:#dadada;"></div>
<div style="left:52px;top:758.35px;width:37.5px;height:1px;background:#b9b9b9;"></div>
<div style="left:89.5px;top:758.35px;width:177.0px;height:1px;background:#dcf2e6;"></div>
<div style="left:266.5px;top:758.35px;width:386.0px;height:1px;background:#dadada;"></div>
<div style="left:52px;top:784.0px;width:37.5px;height:1px;background:#b9b9b9;"></div>
<div style="left:89.5px;top:784.0px;width:177.0px;height:1px;background:#dcf2e6;"></div>
<div style="left:266.5px;top:784.0px;width:386.0px;height:1px;background:#dadada;"></div>
<div style="left:52px;top:809.65px;width:37.5px;height:1px;background:#b9b9b9;"></div>
<div style="left:89.5px;top:809.65px;width:177.0px;height:1px;background:#dcf2e6;"></div>
<div style="left:266.5px;top:809.65px;width:386.0px;height:1px;background:#dadada;"></div>
<div style="left:52px;top:835.3px;width:37.5px;height:1px;background:#b9b9b9;"></div>
<div style="left:89.5px;top:835.3px;width:177.0px;height:1px;background:#dcf2e6;"></div>
<div style="left:266.5px;top:835.3px;width:386.0px;height:1px;background:#dadada;"></div>
<div style="left:52px;top:860.95px;width:37.5px;height:1px;background:#b9b9b9;"></div>
<div style="left:89.5px;top:860.95px;width:177.0px;height:1px;background:#dcf2e6;"></div>
<div style="left:266.5px;top:860.95px;width:386.0px;height:1px;background:#dadada;"></div>
<div style="left:52px;top:886.6px;width:37.5px;height:1px;background:#b9b9b9;"></div>
<div style="left:89.5px;top:886.6px;width:177.0px;height:1px;background:#dcf2e6;"></div>
<div style="left:266.5px;top:886.6px;width:386.0px;height:1px;background:#dadada;"></div>
<div style="left:52px;top:912.25px;width:37.5px;height:1px;background:#b9b9b9;"></div>
<div style="left:89.5px;top:912.25px;width:177.0px;height:1px;background:#dcf2e6;"></div>
<div style="left:266.5px;top:912.25px;width:386.0px;height:1px;background:#dadada;"></div>
<div style="left:52px;top:937.9px;width:37.5px;height:1px;background:#b9b9b9;"></div>
<div style="left:89.5px;top:937.9px;width:177.0px;height:1px;background:#dcf2e6;"></div>
<div style="left:266.5px;top:937.9px;width:386.0px;height:1px;background:#dadada;"></div>
<svg style="left:62px;top:201px" width="21" height="11" viewBox="0 0 21 11"><rect x="0.5" y="0.5" width="11.5" height="2.2" fill="#4a93ad" stroke="none"/><path d="M0.75 1V9.75H12V1 M0.75 5.2H12 M0.75 7.5H12 M4.4 3V9.75 M8.1 3V9.75" fill="none" stroke="#7b7b7b" stroke-width="1.1"/><path d="M14 7.2H19.8L16.9 10.2Z" fill="#7b7b7b"/></svg>
<span class="t" style="left:93.50px;top:197.00px;line-height:19px;color:#333;font-size:13px;font-weight:700;-webkit-text-stroke:0.3px #333;transform-origin:0 0;transform:scaleX(0.9309);">Provincia</span>
<span class="t" style="left:270.40px;top:197.00px;line-height:19px;color:#333;font-size:13px;font-weight:700;-webkit-text-stroke:0.3px #333;transform-origin:0 0;transform:scaleX(0.9612);">Tipo</span>
<span class="t" style="left:497.10px;top:197.00px;line-height:19px;color:#333;font-size:13px;font-weight:700;-webkit-text-stroke:0.3px #333;transform-origin:0 0;transform:scaleX(0.9633);">Suma de Superficie</span>
<div style="left:244.3px;top:197px;width:19px;height:18.6px;background:#fff;border:1px solid #b5b5b5;box-sizing:border-box;"></div>
<svg style="left:249.10000000000002px;top:203.8px" width="9.6" height="5.4" viewBox="0 0 9.6 5.4"><path d="M0 0H9.6L4.8 5.4Z" fill="#595959"/></svg>
<div style="left:471.4px;top:197px;width:19px;height:18.6px;background:#fff;border:1px solid #b5b5b5;box-sizing:border-box;"></div>
<svg style="left:476.2px;top:203.8px" width="9.6" height="5.4" viewBox="0 0 9.6 5.4"><path d="M0 0H9.6L4.8 5.4Z" fill="#595959"/></svg>
<div style="left:630.3px;top:197px;width:19px;height:18.6px;background:#fff;border:1px solid #b5b5b5;box-sizing:border-box;"></div>
<svg style="left:635.0999999999999px;top:203.8px" width="9.6" height="5.4" viewBox="0 0 9.6 5.4"><path d="M0 0H9.6L4.8 5.4Z" fill="#595959"/></svg>
<span class="t" style="left:67.42px;top:223.00px;line-height:21px;color:#1c1c1c;font-size:15.5px;font-weight:400;-webkit-text-stroke:0.12px #1c1c1c;transform-origin:0 0;transform:scaleX(0.9000);">1</span>
<div style="left:66.2px;top:236.7px;width:3.8px;height:3.5px;background:#e9e9e9;"></div>
<div style="left:72px;top:236.7px;width:3.8px;height:3.5px;background:#e9e9e9;"></div>
<span class="t" style="left:92.70px;top:223.00px;line-height:19px;color:#3a3a3a;font-size:13px;font-weight:400;-webkit-text-stroke:0.3px #3a3a3a;transform-origin:0 0;transform:scaleX(0.9981);">Barcelona</span>
<span class="t" style="left:270.30px;top:223.00px;line-height:19px;color:#3a3a3a;font-size:13px;font-weight:400;-webkit-text-stroke:0.3px #3a3a3a;transform-origin:0 0;transform:scaleX(0.8741);">Casa</span>
<span class="t" style="left:621.16px;top:223.00px;line-height:19px;color:#3a3a3a;font-size:13px;font-weight:400;font-style:italic;-webkit-text-stroke:0.3px #3a3a3a;transform-origin:0 0;transform:scaleX(0.9580);">2410</span>
<span class="t" style="left:67.42px;top:248.00px;line-height:21px;color:#1c1c1c;font-size:15.5px;font-weight:400;-webkit-text-stroke:0.12px #1c1c1c;transform-origin:0 0;transform:scaleX(0.9000);">2</span>
<span class="t" style="left:92.70px;top:249.00px;line-height:19px;color:#3a3a3a;font-size:13px;font-weight:400;-webkit-text-stroke:0.3px #3a3a3a;transform-origin:0 0;transform:scaleX(0.9981);">Barcelona</span>
<span class="t" style="left:269.22px;top:249.00px;line-height:19px;color:#3a3a3a;font-size:13px;font-weight:400;-webkit-text-stroke:0.3px #3a3a3a;transform-origin:0 0;transform:scaleX(1.0817);">Industrial</span>
<span class="t" style="left:620.20px;top:249.00px;line-height:19px;color:#3a3a3a;font-size:13px;font-weight:400;font-style:italic;-webkit-text-stroke:0.3px #3a3a3a;transform-origin:0 0;transform:scaleX(0.9902);">3752</span>
<span class="t" style="left:67.42px;top:274.00px;line-height:21px;color:#1c1c1c;font-size:15.5px;font-weight:400;-webkit-text-stroke:0.12px #1c1c1c;transform-origin:0 0;transform:scaleX(0.9000);">3</span>
<span class="t" style="left:92.70px;top:275.00px;line-height:19px;color:#3a3a3a;font-size:13px;font-weight:400;-webkit-text-stroke:0.3px #3a3a3a;transform-origin:0 0;transform:scaleX(0.9981);">Barcelona</span>
<span class="t" style="left:269.30px;top:275.00px;line-height:19px;color:#3a3a3a;font-size:13px;font-weight:400;-webkit-text-stroke:0.3px #3a3a3a;transform-origin:0 0;transform:scaleX(0.9970);">Local</span>
<span class="t" style="left:620.20px;top:275.00px;line-height:19px;color:#3a3a3a;font-size:13px;font-weight:400;font-style:italic;-webkit-text-stroke:0.3px #3a3a3a;transform-origin:0 0;transform:scaleX(0.9902);">1542</span>
<span class="t" style="left:67.42px;top:300.00px;line-height:21px;color:#1c1c1c;font-size:15.5px;font-weight:400;-webkit-text-stroke:0.12px #1c1c1c;transform-origin:0 0;transform:scaleX(0.9000);">4</span>
<span class="t" style="left:92.70px;top:300.00px;line-height:19px;color:#3a3a3a;font-size:13px;font-weight:400;-webkit-text-stroke:0.3px #3a3a3a;transform-origin:0 0;transform:scaleX(0.9981);">Barcelona</span>
<span class="t" style="left:270.30px;top:300.00px;line-height:19px;color:#3a3a3a;font-size:13px;font-weight:400;-webkit-text-stroke:0.3px #3a3a3a;transform-origin:0 0;transform:scaleX(0.9920);">Oficina</span>
<span class="t" style="left:620.20px;top:300.00px;line-height:19px;color:#3a3a3a;font-size:13px;font-weight:400;font-style:italic;-webkit-text-stroke:0.3px #3a3a3a;transform-origin:0 0;transform:scaleX(1.0247);">1659</span>
<span class="t" style="left:67.42px;top:325.00px;line-height:21px;color:#1c1c1c;font-size:15.5px;font-weight:400;-webkit-text-stroke:0.12px #1c1c1c;transform-origin:0 0;transform:scaleX(0.9000);">5</span>
<span class="t" style="left:92.70px;top:326.00px;line-height:19px;color:#3a3a3a;font-size:13px;font-weight:400;-webkit-text-stroke:0.3px #3a3a3a;transform-origin:0 0;transform:scaleX(0.9981);">Barcelona</span>
<span class="t" style="left:269.27px;top:326.00px;line-height:19px;color:#3a3a3a;font-size:13px;font-weight:400;-webkit-text-stroke:0.3px #3a3a3a;transform-origin:0 0;transform:scaleX(1.0315);">Parking</span>
<span class="t" style="left:620.20px;top:326.00px;line-height:19px;color:#3a3a3a;font-size:13px;font-weight:400;font-style:italic;-webkit-text-stroke:0.3px #3a3a3a;transform-origin:0 0;transform:scaleX(0.9902);">4062</span>
<span class="t" style="left:67.42px;top:351.00px;line-height:21px;color:#1c1c1c;font-size:15.5px;font-weight:400;-webkit-text-stroke:0.12px #1c1c1c;transform-origin:0 0;transform:scaleX(0.9000);">6</span>
<span class="t" style="left:92.70px;top:352.00px;line-height:19px;color:#3a3a3a;font-size:13px;font-weight:400;-webkit-text-stroke:0.3px #3a3a3a;transform-origin:0 0;transform:scaleX(0.9981);">Barcelona</span>
<span class="t" style="left:269.29px;top:352.00px;line-height:19px;color:#3a3a3a;font-size:13px;font-weight:400;-webkit-text-stroke:0.3px #3a3a3a;transform-origin:0 0;transform:scaleX(1.0100);">Piso</span>
<span class="t" style="left:620.20px;top:352.00px;line-height:19px;color:#3a3a3a;font-size:13px;font-weight:400;font-style:italic;-webkit-text-stroke:0.3px #3a3a3a;transform-origin:0 0;transform:scaleX(0.9902);">1786</span>
<span class="t" style="left:67.42px;top:377.00px;line-height:21px;color:#1c1c1c;font-size:15.5px;font-weight:400;-webkit-text-stroke:0.12px #1c1c1c;transform-origin:0 0;transform:scaleX(0.9000);">7</span>
<span class="t" style="left:92.70px;top:377.00px;line-height:19px;color:#3a3a3a;font-size:13px;font-weight:400;-webkit-text-stroke:0.3px #3a3a3a;transform-origin:0 0;transform:scaleX(0.9981);">Barcelona</span>
<span class="t" style="left:270.30px;top:377.00px;line-height:19px;color:#3a3a3a;font-size:13px;font-weight:400;-webkit-text-stroke:0.3px #3a3a3a;transform-origin:0 0;transform:scaleX(0.9873);">Suelo</span>
<span class="t" style="left:620.20px;top:377.00px;line-height:19px;color:#3a3a3a;font-size:13px;font-weight:400;font-style:italic;-webkit-text-stroke:0.3px #3a3a3a;transform-origin:0 0;transform:scaleX(0.9902);">1930</span>
<span class="t" style="left:67.42px;top:402.00px;line-height:21px;color:#1c1c1c;font-size:15.5px;font-weight:400;-webkit-text-stroke:0.12px #1c1c1c;transform-origin:0 0;transform:scaleX(0.9000);">8</span>
<span class="t" style="left:93.70px;top:403.00px;line-height:19px;color:#3a3a3a;font-size:13px;font-weight:400;-webkit-text-stroke:0.3px #3a3a3a;transform-origin:0 0;transform:scaleX(0.9827);">Girona</span>
<span class="t" style="left:270.30px;top:403.00px;line-height:19px;color:#3a3a3a;font-size:13px;font-weight:400;-webkit-text-stroke:0.3px #3a3a3a;transform-origin:0 0;transform:scaleX(0.8741);">Casa</span>
<span class="t" style="left:621.16px;top:403.00px;line-height:19px;color:#3a3a3a;font-size:13px;font-weight:400;font-style:italic;-webkit-text-stroke:0.3px #3a3a3a;transform-origin:0 0;transform:scaleX(0.9580);">2480</span>
<span class="t" style="left:67.42px;top:428.00px;line-height:21px;color:#1c1c1c;font-size:15.5px;font-weight:400;-webkit-text-stroke:0.12px #1c1c1c;transform-origin:0 0;transform:scaleX(0.9000);">9</span>
<span class="t" style="left:93.70px;top:428.00px;line-height:19px;color:#3a3a3a;font-size:13px;font-weight:400;-webkit-text-stroke:0.3px #3a3a3a;transform-origin:0 0;transform:scaleX(0.9827);">Girona</span>
<span class="t" style="left:269.22px;top:428.00px;line-height:19px;color:#3a3a3a;font-size:13px;font-weight:400;-webkit-text-stroke:0.3px #3a3a3a;transform-origin:0 0;transform:scaleX(1.0817);">Industrial</span>
<span class="t" style="left:621.16px;top:428.00px;line-height:19px;color:#3a3a3a;font-size:13px;font-weight:400;font-style:italic;-webkit-text-stroke:0.3px #3a3a3a;transform-origin:0 0;transform:scaleX(0.9580);">2987</span>
<span class="t" style="left:63.54px;top:454.00px;line-height:21px;color:#1c1c1c;font-size:15.5px;font-weight:400;-webkit-text-stroke:0.12px #1c1c1c;transform-origin:0 0;transform:scaleX(0.9000);">10</span>
<div style="left:63.2px;top:467.7px;width:3.8px;height:3.5px;background:#e9e9e9;"></div>
<div style="left:69px;top:467.7px;width:3.8px;height:3.5px;background:#e9e9e9;"></div>
<span class="t" style="left:93.70px;top:454.00px;line-height:19px;color:#3a3a3a;font-size:13px;font-weight:400;-webkit-text-stroke:0.3px #3a3a3a;transform-origin:0 0;transform:scaleX(0.9827);">Girona</span>
<span class="t" style="left:269.30px;top:454.00px;line-height:19px;color:#3a3a3a;font-size:13px;font-weight:400;-webkit-text-stroke:0.3px #3a3a3a;transform-origin:0 0;transform:scaleX(0.9970);">Local</span>
<span class="t" style="left:620.20px;top:454.00px;line-height:19px;color:#3a3a3a;font-size:13px;font-weight:400;font-style:italic;-webkit-text-stroke:0.3px #3a3a3a;transform-origin:0 0;transform:scaleX(0.9902);">3538</span>
<span class="t" style="left:64.06px;top:479.00px;line-height:21px;color:#1c1c1c;font-size:15.5px;font-weight:400;-webkit-text-stroke:0.12px #1c1c1c;transform-origin:0 0;transform:scaleX(0.9000);">11</span>
<div style="left:63.2px;top:492.7px;width:3.8px;height:3.5px;background:#e9e9e9;"></div>
<div style="left:69px;top:492.7px;width:3.8px;height:3.5px;background:#e9e9e9;"></div>
<div style="left:70.2px;top:492.7px;width:3.8px;height:3.5px;background:#e9e9e9;"></div>
<div style="left:76px;top:492.7px;width:3.8px;height:3.5px;background:#e9e9e9;"></div>
<span class="t" style="left:93.70px;top:480.00px;line-height:19px;color:#3a3a3a;font-size:13px;font-weight:400;-webkit-text-stroke:0.3px #3a3a3a;transform-origin:0 0;transform:scaleX(0.9827);">Girona</span>
<span class="t" style="left:270.30px;top:480.00px;line-height:19px;color:#3a3a3a;font-size:13px;font-weight:400;-webkit-text-stroke:0.3px #3a3a3a;transform-origin:0 0;transform:scaleX(0.9920);">Oficina</span>
<span class="t" style="left:620.20px;top:480.00px;line-height:19px;color:#3a3a3a;font-size:13px;font-weight:400;font-style:italic;-webkit-text-stroke:0.3px #3a3a3a;transform-origin:0 0;transform:scaleX(0.9902);">3617</span>
<span class="t" style="left:63.54px;top:505.00px;line-height:21px;color:#1c1c1c;font-size:15.5px;font-weight:400;-webkit-text-stroke:0.12px #1c1c1c;transform-origin:0 0;transform:scaleX(0.9000);">12</span>
<div style="left:63.2px;top:518.7px;width:3.8px;height:3.5px;background:#e9e9e9;"></div>
<div style="left:69px;top:518.7px;width:3.8px;height:3.5px;background:#e9e9e9;"></div>
<span class="t" style="left:93.70px;top:505.00px;line-height:19px;color:#3a3a3a;font-size:13px;font-weight:400;-webkit-text-stroke:0.3px #3a3a3a;transform-origin:0 0;transform:scaleX(0.9827);">Girona</span>
<span class="t" style="left:269.27px;top:505.00px;line-height:19px;color:#3a3a3a;font-size:13px;font-weight:400;-webkit-text-stroke:0.3px #3a3a3a;transform-origin:0 0;transform:scaleX(1.0315);">Parking</span>
<span class="t" style="left:621.16px;top:505.00px;line-height:19px;color:#3a3a3a;font-size:13px;font-weight:400;font-style:italic;-webkit-text-stroke:0.3px #3a3a3a;transform-origin:0 0;transform:scaleX(0.9580);">2390</span>
<span class="t" style="left:63.54px;top:531.00px;line-height:21px;color:#1c1c1c;font-size:15.5px;font-weight:400;-webkit-text-stroke:0.12px #1c1c1c;transform-origin:0 0;transform:scaleX(0.9000);">13</span>
<div style="left:63.2px;top:544.7px;width:3.8px;height:3.5px;background:#e9e9e9;"></div>
<div style="left:69px;top:544.7px;width:3.8px;height:3.5px;background:#e9e9e9;"></div>
<span class="t" style="left:93.70px;top:531.00px;line-height:19px;color:#3a3a3a;font-size:13px;font-weight:400;-webkit-text-stroke:0.3px #3a3a3a;transform-origin:0 0;transform:scaleX(0.9827);">Girona</span>
<span class="t" style="left:269.29px;top:531.00px;line-height:19px;color:#3a3a3a;font-size:13px;font-weight:400;-webkit-text-stroke:0.3px #3a3a3a;transform-origin:0 0;transform:scaleX(1.0100);">Piso</span>
<span class="t" style="left:620.20px;top:531.00px;line-height:19px;color:#3a3a3a;font-size:13px;font-weight:400;font-style:italic;-webkit-text-stroke:0.3px #3a3a3a;transform-origin:0 0;transform:scaleX(1.0247);">1479</span>
<span class="t" style="left:63.54px;top:556.00px;line-height:21px;color:#1c1c1c;font-size:15.5px;font-weight:400;-webkit-text-stroke:0.12px #1c1c1c;transform-origin:0 0;transform:scaleX(0.9000);">14</span>
<div style="left:63.2px;top:569.7px;width:3.8px;height:3.5px;background:#e9e9e9;"></div>
<div style="left:69px;top:569.7px;width:3.8px;height:3.5px;background:#e9e9e9;"></div>
<span class="t" style="left:93.70px;top:557.00px;line-height:19px;color:#3a3a3a;font-size:13px;font-weight:400;-webkit-text-stroke:0.3px #3a3a3a;transform-origin:0 0;transform:scaleX(0.9827);">Girona</span>
<span class="t" style="left:270.30px;top:557.00px;line-height:19px;color:#3a3a3a;font-size:13px;font-weight:400;-webkit-text-stroke:0.3px #3a3a3a;transform-origin:0 0;transform:scaleX(0.9873);">Suelo</span>
<span class="t" style="left:620.20px;top:557.00px;line-height:19px;color:#3a3a3a;font-size:13px;font-weight:400;font-style:italic;-webkit-text-stroke:0.3px #3a3a3a;transform-origin:0 0;transform:scaleX(1.0247);">3374</span>
<span class="t" style="left:63.54px;top:582.00px;line-height:21px;color:#1c1c1c;font-size:15.5px;font-weight:400;-webkit-text-stroke:0.12px #1c1c1c;transform-origin:0 0;transform:scaleX(0.9000);">15</span>
<div style="left:63.2px;top:595.7px;width:3.8px;height:3.5px;background:#e9e9e9;"></div>
<div style="left:69px;top:595.7px;width:3.8px;height:3.5px;background:#e9e9e9;"></div>
<span class="t" style="left:92.70px;top:582.00px;line-height:19px;color:#3a3a3a;font-size:13px;font-weight:400;-webkit-text-stroke:0.3px #3a3a3a;transform-origin:0 0;transform:scaleX(0.9981);">Lleida</span>
<span class="t" style="left:270.30px;top:582.00px;line-height:19px;color:#3a3a3a;font-size:13px;font-weight:400;-webkit-text-stroke:0.3px #3a3a3a;transform-origin:0 0;transform:scaleX(0.8741);">Casa</span>
<span class="t" style="left:620.20px;top:582.00px;line-height:19px;color:#3a3a3a;font-size:13px;font-weight:400;font-style:italic;-webkit-text-stroke:0.3px #3a3a3a;transform-origin:0 0;transform:scaleX(0.9902);">1528</span>
<span class="t" style="left:63.54px;top:608.00px;line-height:21px;color:#1c1c1c;font-size:15.5px;font-weight:400;-webkit-text-stroke:0.12px #1c1c1c;transform-origin:0 0;transform:scaleX(0.9000);">16</span>
<div style="left:63.2px;top:621.7px;width:3.8px;height:3.5px;background:#e9e9e9;"></div>
<div style="left:69px;top:621.7px;width:3.8px;height:3.5px;background:#e9e9e9;"></div>
<span class="t" style="left:92.70px;top:608.00px;line-height:19px;color:#3a3a3a;font-size:13px;font-weight:400;-webkit-text-stroke:0.3px #3a3a3a;transform-origin:0 0;transform:scaleX(0.9981);">Lleida</span>
<span class="t" style="left:269.22px;top:608.00px;line-height:19px;color:#3a3a3a;font-size:13px;font-weight:400;-webkit-text-stroke:0.3px #3a3a3a;transform-origin:0 0;transform:scaleX(1.0817);">Industrial</span>
<span class="t" style="left:621.16px;top:608.00px;line-height:19px;color:#3a3a3a;font-size:13px;font-weight:400;font-style:italic;-webkit-text-stroke:0.3px #3a3a3a;transform-origin:0 0;transform:scaleX(0.9580);">2318</span>
<span class="t" style="left:63.54px;top:633.00px;line-height:21px;color:#1c1c1c;font-size:15.5px;font-weight:400;-webkit-text-stroke:0.12px #1c1c1c;transform-origin:0 0;transform:scaleX(0.9000);">17</span>
<div style="left:63.2px;top:646.7px;width:3.8px;height:3.5px;background:#e9e9e9;"></div>
<div style="left:69px;top:646.7px;width:3.8px;height:3.5px;background:#e9e9e9;"></div>
<span class="t" style="left:92.70px;top:634.00px;line-height:19px;color:#3a3a3a;font-size:13px;font-weight:400;-webkit-text-stroke:0.3px #3a3a3a;transform-origin:0 0;transform:scaleX(0.9981);">Lleida</span>
<span class="t" style="left:269.30px;top:634.00px;line-height:19px;color:#3a3a3a;font-size:13px;font-weight:400;-webkit-text-stroke:0.3px #3a3a3a;transform-origin:0 0;transform:scaleX(0.9970);">Local</span>
<span class="t" style="left:621.16px;top:634.00px;line-height:19px;color:#3a3a3a;font-size:13px;font-weight:400;font-style:italic;-webkit-text-stroke:0.3px #3a3a3a;transform-origin:0 0;transform:scaleX(0.9580);">2453</span>
<span class="t" style="left:63.54px;top:659.00px;line-height:21px;color:#1c1c1c;font-size:15.5px;font-weight:400;-webkit-text-stroke:0.12px #1c1c1c;transform-origin:0 0;transform:scaleX(0.9000);">18</span>
<div style="left:63.2px;top:672.7px;width:3.8px;height:3.5px;background:#e9e9e9;"></div>
<div style="left:69px;top:672.7px;width:3.8px;height:3.5px;background:#e9e9e9;"></div>
<span class="t" style="left:92.70px;top:659.00px;line-height:19px;color:#3a3a3a;font-size:13px;font-weight:400;-webkit-text-stroke:0.3px #3a3a3a;transform-origin:0 0;transform:scaleX(0.9981);">Lleida</span>
<span class="t" style="left:270.30px;top:659.00px;line-height:19px;color:#3a3a3a;font-size:13px;font-weight:400;-webkit-text-stroke:0.3px #3a3a3a;transform-origin:0 0;transform:scaleX(0.9920);">Oficina</span>
<span class="t" style="left:620.20px;top:659.00px;line-height:19px;color:#3a3a3a;font-size:13px;font-weight:400;font-style:italic;-webkit-text-stroke:0.3px #3a3a3a;transform-origin:0 0;transform:scaleX(0.9902);">1417</span>
<span class="t" style="left:63.54px;top:684.00px;line-height:21px;color:#1c1c1c;font-size:15.5px;font-weight:400;-webkit-text-stroke:0.12px #1c1c1c;transform-origin:0 0;transform:scaleX(0.9000);">19</span>
<div style="left:63.2px;top:697.7px;width:3.8px;height:3.5px;background:#e9e9e9;"></div>
<div style="left:69px;top:697.7px;width:3.8px;height:3.5px;background:#e9e9e9;"></div>
<span class="t" style="left:92.70px;top:685.00px;line-height:19px;color:#3a3a3a;font-size:13px;font-weight:400;-webkit-text-stroke:0.3px #3a3a3a;transform-origin:0 0;transform:scaleX(0.9981);">Lleida</span>
<span class="t" style="left:269.27px;top:685.00px;line-height:19px;color:#3a3a3a;font-size:13px;font-weight:400;-webkit-text-stroke:0.3px #3a3a3a;transform-origin:0 0;transform:scaleX(1.0315);">Parking</span>
<span class="t" style="left:621.16px;top:685.00px;line-height:19px;color:#3a3a3a;font-size:13px;font-weight:400;font-style:italic;-webkit-text-stroke:0.3px #3a3a3a;transform-origin:0 0;transform:scaleX(0.9580);">2072</span>
<span class="t" style="left:63.54px;top:710.00px;line-height:21px;color:#1c1c1c;font-size:15.5px;font-weight:400;-webkit-text-stroke:0.12px #1c1c1c;transform-origin:0 0;transform:scaleX(0.9000);">20</span>
<span class="t" style="left:92.70px;top:711.00px;line-height:19px;color:#3a3a3a;font-size:13px;font-weight:400;-webkit-text-stroke:0.3px #3a3a3a;transform-origin:0 0;transform:scaleX(0.9981);">Lleida</span>
<span class="t" style="left:269.29px;top:711.00px;line-height:19px;color:#3a3a3a;font-size:13px;font-weight:400;-webkit-text-stroke:0.3px #3a3a3a;transform-origin:0 0;transform:scaleX(1.0100);">Piso</span>
<span class="t" style="left:621.16px;top:711.00px;line-height:19px;color:#3a3a3a;font-size:13px;font-weight:400;font-style:italic;-webkit-text-stroke:0.3px #3a3a3a;transform-origin:0 0;transform:scaleX(0.9580);">2893</span>
<span class="t" style="left:63.54px;top:736.00px;line-height:21px;color:#1c1c1c;font-size:15.5px;font-weight:400;-webkit-text-stroke:0.12px #1c1c1c;transform-origin:0 0;transform:scaleX(0.9000);">21</span>
<div style="left:71.2px;top:749.7px;width:3.8px;height:3.5px;background:#e9e9e9;"></div>
<div style="left:77px;top:749.7px;width:3.8px;height:3.5px;background:#e9e9e9;"></div>
<span class="t" style="left:92.70px;top:736.00px;line-height:19px;color:#3a3a3a;font-size:13px;font-weight:400;-webkit-text-stroke:0.3px #3a3a3a;transform-origin:0 0;transform:scaleX(0.9981);">Lleida</span>
<span class="t" style="left:270.30px;top:736.00px;line-height:19px;color:#3a3a3a;font-size:13px;font-weight:400;-webkit-text-stroke:0.3px #3a3a3a;transform-origin:0 0;transform:scaleX(0.9873);">Suelo</span>
<span class="t" style="left:621.16px;top:736.00px;line-height:19px;color:#3a3a3a;font-size:13px;font-weight:400;font-style:italic;-webkit-text-stroke:0.3px #3a3a3a;transform-origin:0 0;transform:scaleX(0.9580);">2315</span>
<span class="t" style="left:63.54px;top:761.00px;line-height:21px;color:#1c1c1c;font-size:15.5px;font-weight:400;-webkit-text-stroke:0.12px #1c1c1c;transform-origin:0 0;transform:scaleX(0.9000);">22</span>
<span class="t" style="left:93.70px;top:762.00px;line-height:19px;color:#3a3a3a;font-size:13px;font-weight:400;-webkit-text-stroke:0.3px #3a3a3a;transform-origin:0 0;transform:scaleX(1.0066);">Tarragona</span>
<span class="t" style="left:270.30px;top:762.00px;line-height:19px;color:#3a3a3a;font-size:13px;font-weight:400;-webkit-text-stroke:0.3px #3a3a3a;transform-origin:0 0;transform:scaleX(0.8741);">Casa</span>
<span class="t" style="left:620.20px;top:762.00px;line-height:19px;color:#3a3a3a;font-size:13px;font-weight:400;font-style:italic;-webkit-text-stroke:0.3px #3a3a3a;transform-origin:0 0;transform:scaleX(0.9902);">1732</span>
<span class="t" style="left:63.54px;top:787.00px;line-height:21px;color:#1c1c1c;font-size:15.5px;font-weight:400;-webkit-text-stroke:0.12px #1c1c1c;transform-origin:0 0;transform:scaleX(0.9000);">23</span>
<span class="t" style="left:93.70px;top:788.00px;line-height:19px;color:#3a3a3a;font-size:13px;font-weight:400;-webkit-text-stroke:0.3px #3a3a3a;transform-origin:0 0;transform:scaleX(1.0066);">Tarragona</span>
<span class="t" style="left:269.22px;top:788.00px;line-height:19px;color:#3a3a3a;font-size:13px;font-weight:400;-webkit-text-stroke:0.3px #3a3a3a;transform-origin:0 0;transform:scaleX(1.0817);">Industrial</span>
<span class="t" style="left:621.16px;top:788.00px;line-height:19px;color:#3a3a3a;font-size:13px;font-weight:400;font-style:italic;-webkit-text-stroke:0.3px #3a3a3a;transform-origin:0 0;transform:scaleX(0.9580);">2507</span>
<span class="t" style="left:63.54px;top:813.00px;line-height:21px;color:#1c1c1c;font-size:15.5px;font-weight:400;-webkit-text-stroke:0.12px #1c1c1c;transform-origin:0 0;transform:scaleX(0.9000);">24</span>
<span class="t" style="left:93.70px;top:813.00px;line-height:19px;color:#3a3a3a;font-size:13px;font-weight:400;-webkit-text-stroke:0.3px #3a3a3a;transform-origin:0 0;transform:scaleX(1.0066);">Tarragona</span>
<span class="t" style="left:269.30px;top:813.00px;line-height:19px;color:#3a3a3a;font-size:13px;font-weight:400;-webkit-text-stroke:0.3px #3a3a3a;transform-origin:0 0;transform:scaleX(0.9970);">Local</span>
<span class="t" style="left:621.19px;top:813.00px;line-height:19px;color:#3a3a3a;font-size:13px;font-weight:400;font-style:italic;-webkit-text-stroke:0.3px #3a3a3a;transform-origin:0 0;transform:scaleX(0.9902);">2864</span>
<span class="t" style="left:63.54px;top:838.00px;line-height:21px;color:#1c1c1c;font-size:15.5px;font-weight:400;-webkit-text-stroke:0.12px #1c1c1c;transform-origin:0 0;transform:scaleX(0.9000);">25</span>
<span class="t" style="left:93.70px;top:839.00px;line-height:19px;color:#3a3a3a;font-size:13px;font-weight:400;-webkit-text-stroke:0.3px #3a3a3a;transform-origin:0 0;transform:scaleX(1.0066);">Tarragona</span>
<span class="t" style="left:270.30px;top:839.00px;line-height:19px;color:#3a3a3a;font-size:13px;font-weight:400;-webkit-text-stroke:0.3px #3a3a3a;transform-origin:0 0;transform:scaleX(0.9920);">Oficina</span>
<span class="t" style="left:620.20px;top:839.00px;line-height:19px;color:#3a3a3a;font-size:13px;font-weight:400;font-style:italic;-webkit-text-stroke:0.3px #3a3a3a;transform-origin:0 0;transform:scaleX(0.9902);">3348</span>
<span class="t" style="left:63.54px;top:864.00px;line-height:21px;color:#1c1c1c;font-size:15.5px;font-weight:400;-webkit-text-stroke:0.12px #1c1c1c;transform-origin:0 0;transform:scaleX(0.9000);">26</span>
<span class="t" style="left:93.70px;top:865.00px;line-height:19px;color:#3a3a3a;font-size:13px;font-weight:400;-webkit-text-stroke:0.3px #3a3a3a;transform-origin:0 0;transform:scaleX(1.0066);">Tarragona</span>
<span class="t" style="left:269.27px;top:865.00px;line-height:19px;color:#3a3a3a;font-size:13px;font-weight:400;-webkit-text-stroke:0.3px #3a3a3a;transform-origin:0 0;transform:scaleX(1.0315);">Parking</span>
<span class="t" style="left:621.19px;top:865.00px;line-height:19px;color:#3a3a3a;font-size:13px;font-weight:400;font-style:italic;-webkit-text-stroke:0.3px #3a3a3a;transform-origin:0 0;transform:scaleX(0.9902);">2071</span>
<span class="t" style="left:63.54px;top:890.00px;line-height:21px;color:#1c1c1c;font-size:15.5px;font-weight:400;-webkit-text-stroke:0.12px #1c1c1c;transform-origin:0 0;transform:scaleX(0.9000);">27</span>
<span class="t" style="left:93.70px;top:890.00px;line-height:19px;color:#3a3a3a;font-size:13px;font-weight:400;-webkit-text-stroke:0.3px #3a3a3a;transform-origin:0 0;transform:scaleX(1.0066);">Tarragona</span>
<span class="t" style="left:269.29px;top:890.00px;line-height:19px;color:#3a3a3a;font-size:13px;font-weight:400;-webkit-text-stroke:0.3px #3a3a3a;transform-origin:0 0;transform:scaleX(1.0100);">Piso</span>
<span class="t" style="left:620.20px;top:890.00px;line-height:19px;color:#3a3a3a;font-size:13px;font-weight:400;font-style:italic;-webkit-text-stroke:0.3px #3a3a3a;transform-origin:0 0;transform:scaleX(0.9902);">1625</span>
<span class="t" style="left:63.54px;top:915.00px;line-height:21px;color:#1c1c1c;font-size:15.5px;font-weight:400;-webkit-text-stroke:0.12px #1c1c1c;transform-origin:0 0;transform:scaleX(0.9000);">28</span>
<span class="t" style="left:93.70px;top:916.00px;line-height:19px;color:#3a3a3a;font-size:13px;font-weight:400;-webkit-text-stroke:0.3px #3a3a3a;transform-origin:0 0;transform:scaleX(1.0066);">Tarragona</span>
<span class="t" style="left:270.30px;top:916.00px;line-height:19px;color:#3a3a3a;font-size:13px;font-weight:400;-webkit-text-stroke:0.3px #3a3a3a;transform-origin:0 0;transform:scaleX(0.9873);">Suelo</span>
<span class="t" style="left:620.20px;top:916.00px;line-height:19px;color:#3a3a3a;font-size:13px;font-weight:400;font-style:italic;-webkit-text-stroke:0.3px #3a3a3a;transform-origin:0 0;transform:scaleX(0.9902);">3582</span>
<span class="t" style="left:1650.44px;top:165.00px;line-height:31px;color:#6a9c87;font-size:24px;font-weight:400;transform-origin:0 0;transform:scaleX(0.9588);">Configuración de la co...</span>
<svg style="left:1917px;top:172px" width="15" height="15" viewBox="0 0 15 15"><path d="M1.8 2 L12.8 12.6 M12.8 2 L1.8 12.6" stroke="#666" stroke-width="2.7" fill="none"/></svg>
<svg style="left:1640.4px;top:217.4px" width="9" height="10" viewBox="0 0 9 10"><path d="M8 1.5V8.6H0.8Z" fill="#777"/></svg>
<span class="t" style="left:1656.69px;top:212.00px;line-height:21px;color:#217346;font-size:15px;font-weight:700;-webkit-text-stroke:0.3px #217346;transform-origin:0 0;transform:scaleX(0.9068);">PROPIEDADES</span>
<span class="t" style="left:1656.77px;top:238.00px;line-height:20px;color:#444;font-size:14.5px;font-weight:400;-webkit-text-stroke:0.3px #444;transform-origin:0 0;transform:scaleX(1.0335);">Nombre</span>
<div style="left:1657px;top:259.1px;width:276px;height:26.5px;background:#fff;border:1.3px solid #adadad;box-sizing:border-box;"></div>
<span class="t" style="left:1664.30px;top:263.00px;line-height:20px;color:#5a5a5a;font-size:14px;font-weight:400;-webkit-text-stroke:0.3px #5a5a5a;transform-origin:0 0;transform:scaleX(0.9708);">Tabla</span>
<span class="t" style="left:1657.60px;top:295.00px;line-height:20px;color:#2f93b8;font-size:14.5px;font-weight:400;-webkit-text-stroke:0.3px #2f93b8;transform-origin:0 0;transform:scaleX(0.9921);">Todas las propiedades</span>
<svg style="left:1640.4px;top:333.6px" width="9" height="10" viewBox="0 0 9 10"><path d="M8 1.5V8.6H0.8Z" fill="#777"/></svg>
<span class="t" style="left:1656.69px;top:327.00px;line-height:21px;color:#217346;font-size:15px;font-weight:700;-webkit-text-stroke:0.3px #217346;transform-origin:0 0;transform:scaleX(0.9139);">PASOS APLICADOS</span>
<div style="left:1657px;top:355px;width:276px;height:619px;background:#fff;border:1.3px solid #a9a9a9;box-sizing:border-box;"></div>
<div style="left:1658.3px;top:405.2px;width:273.4px;height:24px;background:#d3efe0;"></div>
<span class="t" style="left:1682.90px;top:359.00px;line-height:20px;color:#404040;font-size:14px;font-weight:400;-webkit-text-stroke:0.3px #404040;transform-origin:0 0;transform:scaleX(1.0574);">Origen</span>
<span class="t" style="left:1682.70px;top:384.00px;line-height:20px;color:#404040;font-size:14px;font-weight:400;-webkit-text-stroke:0.3px #404040;transform-origin:0 0;transform:scaleX(1.0435);">Tipo cambiado</span>
<span class="t" style="left:1682.49px;top:408.00px;line-height:20px;color:#404040;font-size:14px;font-weight:400;-webkit-text-stroke:0.3px #404040;transform-origin:0 0;transform:scaleX(1.0067);">Rellenar hacia abajo</span>
<svg style="left:1663.6px;top:411.4px" width="14" height="13" viewBox="0 0 14 13"><path d="M1.2 1.2 L13 12 M13 1.2 L1.2 12" stroke="#555" stroke-width="1.5" fill="none"/></svg>
<svg style="left:1596px;top:672px" width="324" height="313" viewBox="1596 672 324 313"><rect x="1599" y="674.2" width="319.3" height="308.8" fill="#f3f3f3"/><rect x="1604" y="677.4" width="309" height="303.4" fill="#fff"/><rect x="1770" y="715" width="132" height="221.2" rx="7" ry="7" fill="#fff" stroke="#227547" stroke-width="9.6"/><rect x="1784" y="741.2" width="27.4" height="22.1" fill="#227547"/><rect x="1826" y="741.2" width="47.0" height="22.1" fill="#227547"/><rect x="1784" y="778.0" width="27.4" height="22.1" fill="#227547"/><rect x="1826" y="778.0" width="47.0" height="22.1" fill="#227547"/><rect x="1784" y="814.8" width="27.4" height="22.1" fill="#227547"/><rect x="1826" y="814.8" width="47.0" height="22.1" fill="#227547"/><rect x="1784" y="851.6" width="27.4" height="22.1" fill="#227547"/><rect x="1826" y="851.6" width="47.0" height="22.1" fill="#227547"/><rect x="1784" y="888.4" width="27.4" height="22.1" fill="#227547"/><rect x="1826" y="888.4" width="47.0" height="22.1" fill="#227547"/><rect x="1837.4" y="798" width="14.9" height="76.6" rx="2.5" fill="#fff"/><polygon points="1610.7,711.2 1785.4,683.8 1785.4,971.8 1764,971.8 1610.7,944.6" fill="#227547"/></svg>
<svg style="left:1596px;top:672px" width="324" height="313" viewBox="1596 672 324 313"><path d="M1626.2 805.2H1667.5V817.9H1639.2V834.5H1664V846.6H1639.2V865.7H1661V878.4H1626.2Q1624.2 878.4 1624.2 876.4V807.2Q1624.2 805.2 1626.2 805.2Z" fill="#fff"/><polygon points="1657,775.9 1676.1,774 1692.9,810.9 1713,772.1 1732.1,770.8 1706.4,825.6 1732.8,881.6 1709.9,879.7 1692.4,841.5 1677.4,878.1 1659.4,878.1 1678.4,826.2" fill="#fff"/></svg>
<span class="t" style="left:1724.76px;top:783.00px;line-height:120px;color:#fff;font-size:104px;font-weight:700;transform-origin:0 0;transform:scaleX(0.8588);">c</span>
<span class="t" style="left:1771.44px;top:783.00px;line-height:120px;color:#fff;font-size:104px;font-weight:700;transform-origin:0 0;transform:scaleX(0.9647);">e</span>
<span class="t" style="left:1618.32px;top:723.20px;line-height:27px;color:#effff5;font-size:20.5px;font-weight:700;-webkit-text-stroke:0.45px #effff5;transform-origin:0 21.00px;transform:rotate(-10.6deg) scaleX(0.9807);">ExcelTrucos.com</span>
<span class="t" style="left:11.40px;top:1004.00px;line-height:19px;color:#444;font-size:13.5px;font-weight:400;word-spacing:2px;-webkit-text-stroke:0.15px #444;transform-origin:0 0;transform:scaleX(0.8797);">3 COLUMNAS, 28 FILAS</span>
<span class="t" style="left:1707.50px;top:1004.00px;line-height:19px;color:#444;font-size:13.5px;font-weight:400;word-spacing:3.4px;-webkit-text-stroke:0.15px #444;transform-origin:0 0;transform:scaleX(0.8519);">VISTA PREVIA DESCARGADA A LAS 20</span>
</div></body></html>
